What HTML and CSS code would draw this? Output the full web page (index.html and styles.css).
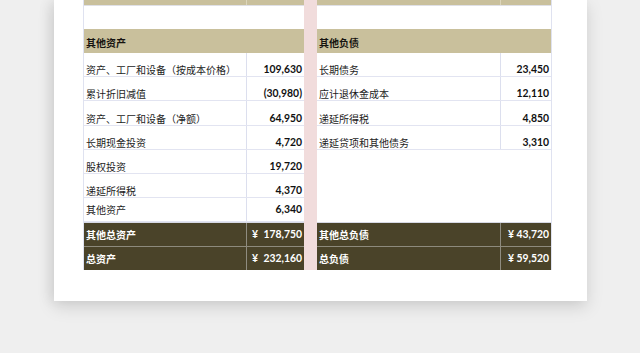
FILE: index.html
```html
<!DOCTYPE html>
<html lang="zh">
<head>
<meta charset="utf-8">
<link rel="stylesheet" href="styles.css">
</head>
<body>
<div class="card">
  <div class="tbl tbl-left">
    <div class="row band"><div class="lbl"></div><div class="val"></div></div>
    <div class="row blank"></div>
    <div class="row head"><div class="lbl">其他资产</div></div>
    <div class="row data"><div class="lbl">资产、工厂和设备（按成本价格）</div><div class="val">109,630</div></div>
    <div class="row data"><div class="lbl">累计折旧减值</div><div class="val">(30,980)</div></div>
    <div class="row data tall"><div class="lbl">资产、工厂和设备（净额）</div><div class="val">64,950</div></div>
    <div class="row data"><div class="lbl">长期现金投资</div><div class="val">4,720</div></div>
    <div class="row data"><div class="lbl">股权投资</div><div class="val">19,720</div></div>
    <div class="row data"><div class="lbl">递延所得税</div><div class="val">4,370</div></div>
    <div class="row data mid"><div class="lbl">其他资产</div><div class="val">6,340</div></div>
    <div class="row total"><div class="lbl">其他总资产</div><div class="val split"><span>¥</span><span>178,750</span></div></div>
    <div class="row total last"><div class="lbl">总资产</div><div class="val split"><span>¥</span><span>232,160</span></div></div>
  </div>
  <div class="gap"></div>
  <div class="tbl tbl-right">
    <div class="row band"><div class="lbl"></div><div class="val"></div></div>
    <div class="row blank"></div>
    <div class="row head"><div class="lbl">其他负债</div></div>
    <div class="row data"><div class="lbl">长期债务</div><div class="val">23,450</div></div>
    <div class="row data"><div class="lbl">应计退休金成本</div><div class="val">12,110</div></div>
    <div class="row data tall"><div class="lbl">递延所得税</div><div class="val">4,850</div></div>
    <div class="row data"><div class="lbl">递延贷项和其他债务</div><div class="val">3,310</div></div>
    <div class="row empty"></div>
    <div class="row total"><div class="lbl">其他总负债</div><div class="val">¥ 43,720</div></div>
    <div class="row total last"><div class="lbl">总负债</div><div class="val">¥ 59,520</div></div>
  </div>
</div>
</body>
</html>
```

FILE: styles.css
```css
* { box-sizing: border-box; }
html, body { margin: 0; padding: 0; }
body {
  background: #efefef;
  width: 640px;
  height: 353px;
  overflow: hidden;
  font-family: "Noto Sans CJK SC", "Noto Sans", sans-serif;
  color: #1c1c1c;
}
.card {
  margin-left: 54px;
  width: 533px;
  height: 301px;
  background: #ffffff;
  display: flex;
  align-items: flex-start;
  padding: 0 35px 0 29px;
  box-shadow: 0 6px 16px rgba(0, 0, 0, 0.13), -5px 0 12px rgba(0, 0, 0, 0.06);
}
.tbl {
  display: flex;
  flex-direction: column;
}
.tbl-left {
  width: 221px;
  border-left: 1px solid #dfe2f0;
}
.tbl-right {
  width: 235px;
  border-right: 1px solid #dfe2f0;
}
.tbl-left .lbl { width: 162px; }
.tbl-left .val { width: 58px; }
.tbl-right .lbl { width: 183px; }
.tbl-right .val { width: 51px; }
.gap {
  width: 13px;
  height: 270px;
  background: #f1dcdc;
}
.row {
  display: flex;
  height: 24px;
  font-size: 10px;
  line-height: 13px;
}
.lbl {
  padding-left: 2px;
  white-space: nowrap;
}
.val {
  border-left: 1px solid #dcdfee;
  text-align: right;
  padding-right: 2px;
  font-family: Lato, "Liberation Sans", sans-serif;
  font-weight: 700;
  font-size: 10.4px;
  color: #111;
}
.band {
  height: 6px;
  background: #c9c09c;
  border-bottom: 1px solid #dfe0e6;
}
.band .val { border-left-color: #ddd6bb; }
.blank { height: 23px; }
.head {
  background: #c9c09c;
  align-items: center;
  font-weight: 700;
  color: #161410;
}
.head .lbl { padding-top: 2px; }
.data {
  border-bottom: 1px solid #e2e4f1;
}
.data .lbl, .data .val {
  display: flex;
  align-items: flex-end;
  justify-content: flex-start;
  padding-bottom: 0;
}
.data .val { justify-content: flex-end; }
.data.tall { height: 25px; }
.data.mid .lbl, .data.mid .val {
  align-items: center;
}
.empty { height: 72px; }
.total {
  background: #4a4329;
  color: #ffffff;
  font-weight: 700;
  align-items: stretch;
  border-top: 1px solid #d6d8e4;
}
.total.last {
  border-top: 1px solid #8d8a7c;
}
.total .lbl, .total .val {
  display: flex;
  align-items: center;
}
.total .val {
  color: #ffffff;
  border-left: 1px solid #8f8c80;
  justify-content: flex-end;
}
.total .val.split {
  justify-content: space-between;
  padding-left: 5px;
}
```
